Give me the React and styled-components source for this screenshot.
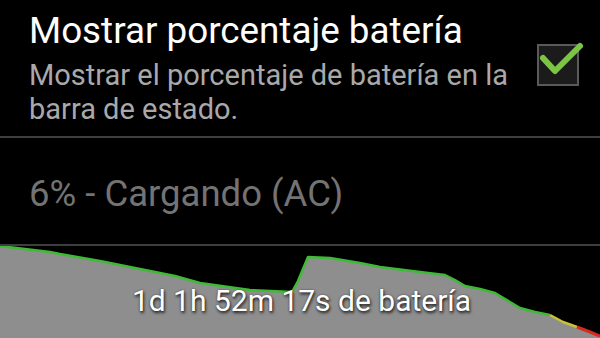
import React from "react";
import styled, { createGlobalStyle } from "styled-components";

const Global = createGlobalStyle`
  html, body { margin: 0; padding: 0; background: #000; }
  body { font-family: Roboto, "Noto Sans", "DejaVu Sans", sans-serif; overflow: hidden; }
  #root { width: 600px; height: 338px; }
`;

const Screen = styled.div`
  width: 600px;
  height: 338px;
  background: #000;
  display: flex;
  flex-direction: column;
  overflow: hidden;
`;

const PrefRow = styled.div`
  height: 136px;
  box-sizing: border-box;
  padding: 10px 21px 0 29px;
  display: flex;
  align-items: flex-start;
  justify-content: space-between;
`;

const TextBlock = styled.div`
  display: flex;
  flex-direction: column;
  gap: 6px;
`;

const Title = styled.div`
  font-size: 36.8px;
  line-height: 42px;
  color: #ffffff;
  white-space: nowrap;
`;

const Summary = styled.div`
  font-size: 29px;
  line-height: 34px;
  color: #a9a9ab;
  width: 485px;
`;

const CheckBox = styled.div`
  width: 42px;
  height: 42px;
  box-sizing: border-box;
  margin-top: 34px;
  border: 2px solid #5a5a5a;
  background: #1b1b1b;
  position: relative;
  flex-shrink: 0;
`;

const CheckMark = styled.svg`
  position: absolute;
  left: -2px;
  top: -2px;
  overflow: visible;
`;

const Divider = styled.div`
  height: 2px;
  background: #3e3e3e;
  flex-shrink: 0;
`;

const StatusRow = styled.div`
  height: 106px;
  box-sizing: border-box;
  padding: 35px 0 0 29px;
`;

const StatusText = styled.div`
  font-size: 36.5px;
  line-height: 42px;
  color: #737373;
`;

const Chart = styled.div`
  position: relative;
  flex: 1;
  display: flex;
  justify-content: center;
  padding-top: 38px;
  box-sizing: border-box;
`;

const ChartSvg = styled.svg`
  position: absolute;
  left: 0;
  top: 0;
  width: 600px;
  height: 92px;
`;

const ChartLabel = styled.div`
  position: relative;
  font-size: 30px;
  line-height: 34px;
  color: #ffffff;
  padding-left: 3px;
  white-space: nowrap;
  text-shadow: 1px 2px 3px rgba(0, 0, 0, 0.75), 0 0 2px rgba(0, 0, 0, 0.5);
`;

const greenPts = [
  [0, 246], [50, 252], [60, 254], [100, 261], [130, 267], [150, 271],
  [175, 276], [200, 283], [250, 290], [292, 292], [298, 281], [308, 257],
  [330, 258], [360, 263], [380, 267], [420, 272], [445, 275], [455, 280],
  [465, 286], [480, 289], [495, 293], [510, 302], [520, 308], [535, 312],
  [550, 315],
];
const yellowPts = [[550, 315], [563, 322], [577, 327]];
const redPts = [[577, 327], [590, 332], [600, 336]];

const toPath = (pts) => pts.map((p, i) => `${i ? "L" : "M"}${p[0]} ${p[1]}`).join(" ");

const fillPath =
  toPath([...greenPts, ...yellowPts.slice(1), ...redPts.slice(1)]) +
  " L600 340 L0 340 Z";

export default function App() {
  return (
    <Screen>
      <Global />
      <PrefRow>
        <TextBlock>
          <Title>Mostrar porcentaje batería</Title>
          <Summary>Mostrar el porcentaje de batería en la barra de estado.</Summary>
        </TextBlock>
        <CheckBox>
          <CheckMark width="42" height="42" viewBox="0 0 42 42">
            <path
              d="M6 14 L18 27 L43 2"
              fill="none"
              stroke="#7cc443"
              strokeWidth="6"
              strokeLinecap="round"
              strokeLinejoin="round"
            />
          </CheckMark>
        </CheckBox>
      </PrefRow>
      <Divider />
      <StatusRow>
        <StatusText>6% - Cargando (AC)</StatusText>
      </StatusRow>
      <Divider />
      <Chart>
        <ChartSvg viewBox="0 246 600 92" preserveAspectRatio="none">
          <path d={fillPath} fill="#8e8e8e" />
          <path d={toPath(greenPts)} fill="none" stroke="#3dbb34" strokeWidth="2.5" strokeLinejoin="round" />
          <path d={toPath(yellowPts)} fill="none" stroke="#c9c234" strokeWidth="2.5" strokeLinejoin="round" />
          <path d={toPath(redPts)} fill="none" stroke="#d42a22" strokeWidth="3" strokeLinejoin="round" />
        </ChartSvg>
        <ChartLabel>1d 1h 52m 17s de batería</ChartLabel>
      </Chart>
    </Screen>
  );
}
